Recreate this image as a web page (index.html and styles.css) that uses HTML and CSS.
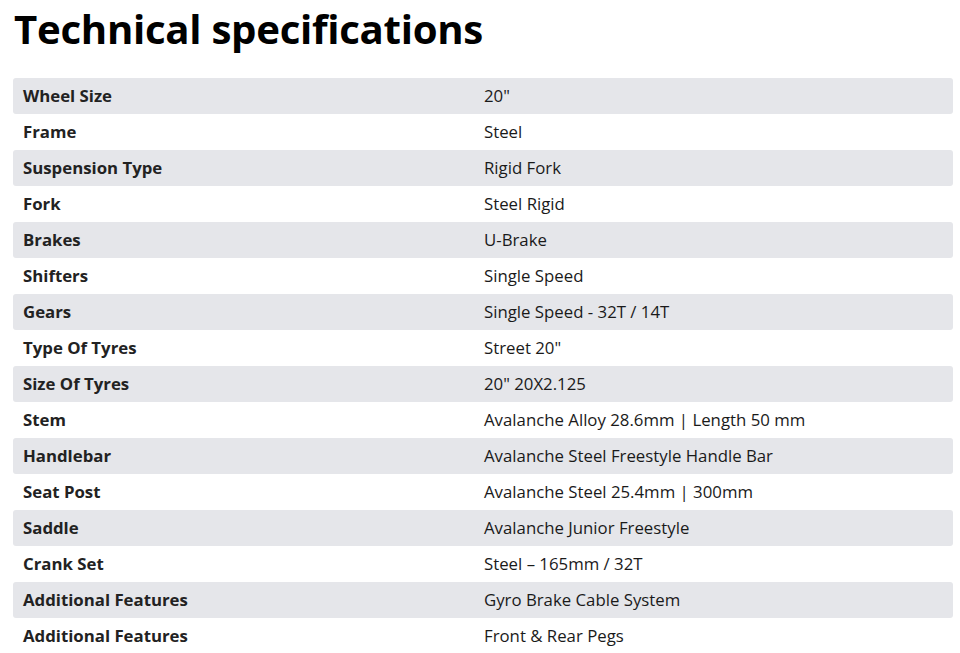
FILE: index.html
```html
<!DOCTYPE html>
<html>
<head>
<meta charset="utf-8">
<link rel="stylesheet" href="styles.css">
</head>
<body>
<h1 class="title">Technical specifications</h1>
<div class="specs">
  <div class="row"><div class="label">Wheel Size</div><div class="value">20"</div></div>
  <div class="row"><div class="label">Frame</div><div class="value">Steel</div></div>
  <div class="row"><div class="label">Suspension Type</div><div class="value">Rigid Fork</div></div>
  <div class="row"><div class="label">Fork</div><div class="value">Steel Rigid</div></div>
  <div class="row"><div class="label">Brakes</div><div class="value">U-Brake</div></div>
  <div class="row"><div class="label">Shifters</div><div class="value">Single Speed</div></div>
  <div class="row"><div class="label">Gears</div><div class="value">Single Speed - 32T / 14T</div></div>
  <div class="row"><div class="label">Type Of Tyres</div><div class="value">Street 20"</div></div>
  <div class="row"><div class="label">Size Of Tyres</div><div class="value">20" 20X2.125</div></div>
  <div class="row"><div class="label">Stem</div><div class="value">Avalanche Alloy 28.6mm | Length 50 mm</div></div>
  <div class="row"><div class="label">Handlebar</div><div class="value">Avalanche Steel Freestyle Handle Bar</div></div>
  <div class="row"><div class="label">Seat Post</div><div class="value">Avalanche Steel 25.4mm | 300mm</div></div>
  <div class="row"><div class="label">Saddle</div><div class="value">Avalanche Junior Freestyle</div></div>
  <div class="row"><div class="label">Crank Set</div><div class="value">Steel – 165mm / 32T</div></div>
  <div class="row"><div class="label">Additional Features</div><div class="value">Gyro Brake Cable System</div></div>
  <div class="row"><div class="label">Additional Features</div><div class="value">Front &amp; Rear Pegs</div></div>
</div>
</body>
</html>
```
FILE: styles.css
```css
html, body {
  margin: 0;
  padding: 0;
  background: #fff;
}
body {
  font-family: "Open Sans", "Noto Sans", sans-serif;
  color: #111;
  padding: 0 7px 0 13px;
}
.title {
  margin: 0;
  padding: 0 0 0 1px;
  height: 78px;
  font-size: 40.2px;
  font-weight: 700;
  line-height: 57px;
  color: #000;
  letter-spacing: -0.3px;
}
.specs {
  display: flex;
  flex-direction: column;
}
.row {
  display: grid;
  grid-template-columns: 461px 1fr;
  height: 36px;
  box-sizing: border-box;
  padding-bottom: 2px;
  align-items: center;
  font-size: 16.8px;
  border-radius: 3px;
}
.row:nth-child(odd) {
  background: #e5e6ea;
}
.label {
  padding-left: 10px;
  font-weight: 700;
  color: #222;
}
.value {
  padding-left: 10px;
  color: #1a1a1a;
}
```
